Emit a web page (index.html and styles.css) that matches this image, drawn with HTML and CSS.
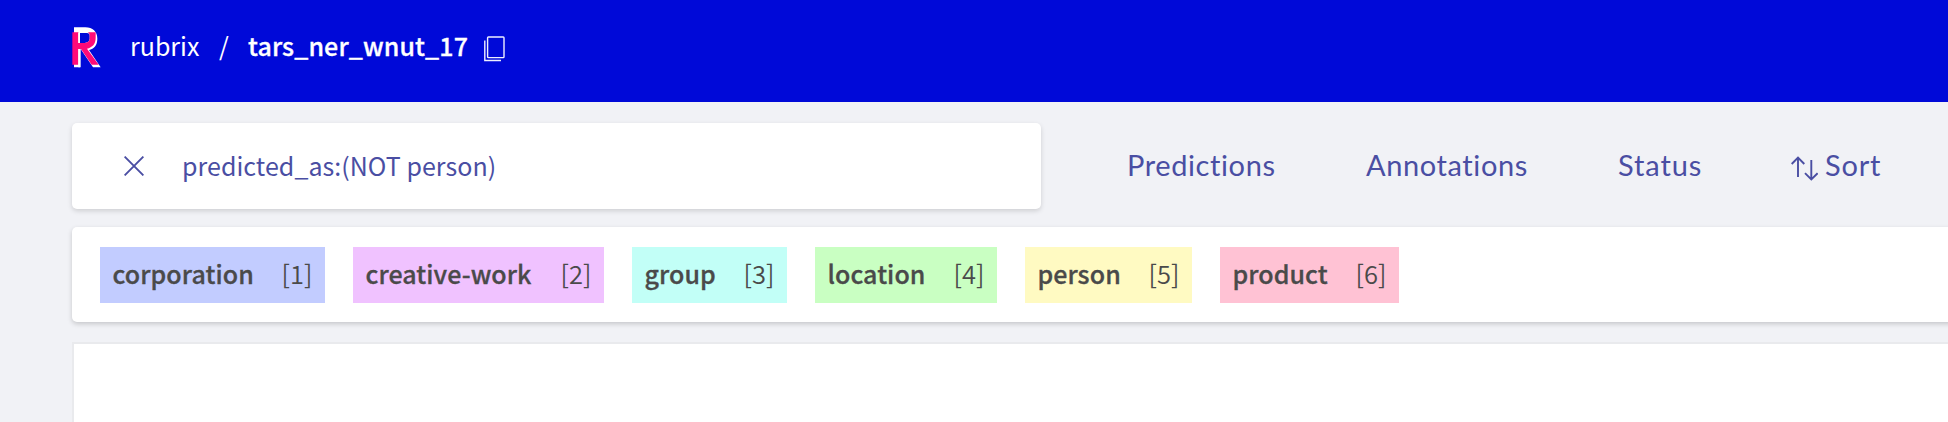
FILE: index.html
```
<!DOCTYPE html>
<html lang="en">
<head>
<meta charset="utf-8">
<title>rubrix / tars_ner_wnut_17</title>
<link rel="stylesheet" href="styles.css">
</head>
<body>
<header class="topbar">
  <svg class="logo" viewBox="0 0 87 123" aria-label="Rubrix">
    <path fill="#fff" d="M6 1H40C62 1 76 14 76 35C76 55 66 66 51 69L86 121H63L26 66V121H6Z"/>
    <path fill="#0009d8" d="M24 18H45C50 18 53 21 53 26V34C53 43 47 48 38 48H24Z"/>
    <path fill="#ff0a78" d="M1 16H19V48H38C47 48 53 43 53 34V26C53 21 51 18 47 16H71V32C71 51 61 61 45 65L80 113H59L27 66H19V113H1Z"/>
    <path fill="#fff" d="M19 18H24V48H19ZM19 66H24V121H19Z"/>
  </svg>
  <nav class="crumbs">
    <a class="crumb">rubrix</a>
    <span class="slash">/</span>
    <a class="crumb current">tars_ner_wnut_17</a>
  </nav>
  <svg class="copy" viewBox="0 0 21 26" fill="none" stroke="#eeefff" stroke-width="1.4">
    <rect x="3.6" y="1" width="16.4" height="20.6" rx=".8"/>
    <path d="M.8 4.5V24.5H17"/>
  </svg>
</header>
<main class="content">
  <div class="filters">
    <div class="search">
      <svg class="close" viewBox="0 0 20 20" fill="none" stroke="#4a4ea3" stroke-width="1.9"><path d="M.6.6 19.4 19.4M19.4.6.6 19.4"/></svg>
      <span class="query">predicted_as:(NOT person)</span>
    </div>
    <div class="menu">
      <span class="item predictions">Predictions</span>
      <span class="item annotations">Annotations</span>
      <span class="item status">Status</span>
      <span class="item sort">
        <svg class="arrows" viewBox="0 0 27 25" fill="none" stroke="#4a4ea3" stroke-width="1.9"><path d="M7 21V1.5M.7 8 7 1.5 13.3 8M20.3 4V23.5M14 17.2 20.3 23.5 26.6 17.2"/></svg>
        <span class="sort-text">Sort</span>
      </span>
    </div>
  </div>
  <div class="labels">
    <div class="tag corporation"><b>corporation</b><span>[1]</span></div>
    <div class="tag creative"><b>creative-work</b><span>[2]</span></div>
    <div class="tag group"><b>group</b><span>[3]</span></div>
    <div class="tag location"><b>location</b><span>[4]</span></div>
    <div class="tag person"><b>person</b><span>[5]</span></div>
    <div class="tag product"><b>product</b><span>[6]</span></div>
  </div>
  <div class="record"></div>
</main>
</body>
</html>
```
FILE: styles.css
```
* { box-sizing: border-box; }
body {
  margin: 0;
  height: 422px;
  overflow: hidden;
  background: #f1f2f6;
  font: 25px/36px "Noto Sans CJK SC", "Noto Sans", sans-serif;
  white-space: nowrap;
}
.topbar {
  display: flex;
  align-items: flex-start;
  height: 102px;
  padding: 27px 0 0 72px;
  background: #0009d8;
  color: #fff;
}
.logo { width: 29px; height: 41px; }
.crumbs { display: flex; margin-left: 29px; }
.crumb { width: 70px; }
.slash { width: 8px; margin: 0 21px 0 19px; }
.crumb.current {
  width: 220px;
  font-weight: 500;
  letter-spacing: .12px;
  -webkit-text-stroke: .3px #fff;
}
.copy { width: 21px; height: 26px; margin: 9px 0 0 16px; }
.content { padding: 21px 0 0 72px; }
.filters { display: flex; }
.search {
  display: flex;
  align-items: center;
  width: 969px;
  height: 86px;
  padding-left: 52px;
  border-radius: 5px;
  background: #fff;
  box-shadow: 0 2px 5px rgba(0, 0, 0, .15);
  color: #4a4ea3;
}
.close { width: 20px; height: 20px; margin-right: 38px; }
.query { padding-bottom: 2px; letter-spacing: .04px; }
.menu {
  display: flex;
  align-items: center;
  padding: 0 0 2px 86px;
  color: #4a4ea3;
  font: 29px/36px Lato, sans-serif;
  font-variant-ligatures: none;
  letter-spacing: .6px;
}
.predictions { width: 239px; }
.annotations { width: 252px; }
.status { width: 174px; letter-spacing: .9px; }
.sort { display: flex; align-items: center; letter-spacing: .8px; }
.arrows { width: 27px; height: 25px; margin: 6px 7px 0 -1px; }
.labels {
  display: flex;
  align-items: center;
  gap: 28px;
  height: 95px;
  margin: 18px -10px 0 0;
  padding-left: 28px;
  border-radius: 5px;
  background: #fff;
  box-shadow: 0 2px 5px rgba(0, 0, 0, .18);
}
.tag {
  display: flex;
  align-items: center;
  justify-content: space-between;
  height: 56px;
  padding: 0 12.5px 3px 12.4px;
  color: #4a4a4a;
}
.tag b { font-weight: 500; letter-spacing: .08px; -webkit-text-stroke: .3px #4a4a4a; }
.tag span { font-weight: 350; font-size: 25.5px; }
.corporation { width: 225px; background: #c2ccff; }
.creative { width: 251px; background: #f0c2ff; }
.group { width: 155px; background: #c2fff7; }
.location { width: 182px; background: #c9ffc2; }
.person { width: 167px; background: #fffac2; }
.product { width: 179px; background: #ffc2d4; }
.record {
  height: 90px;
  margin-top: 20px;
  border: solid #e9eaed;
  border-width: 2px 0 0 2px;
  background: #fff;
}
```
